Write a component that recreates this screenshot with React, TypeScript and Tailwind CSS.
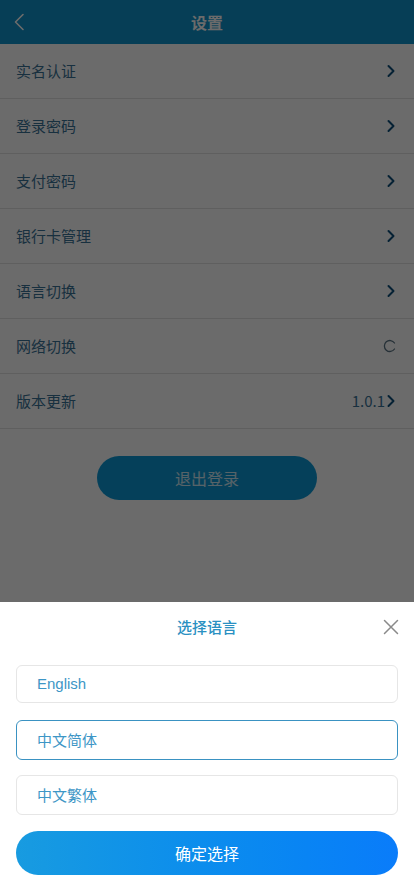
import React from "react";

const rows: { label: string; right?: "chevron" | "spinner" | "version" }[] = [
  { label: "实名认证", right: "chevron" },
  { label: "登录密码", right: "chevron" },
  { label: "支付密码", right: "chevron" },
  { label: "银行卡管理", right: "chevron" },
  { label: "语言切换", right: "chevron" },
  { label: "网络切换", right: "spinner" },
  { label: "版本更新", right: "version" },
];

const font = { fontFamily: '"Noto Sans CJK SC", "Noto Sans", sans-serif' };

function Chevron() {
  return (
    <svg width="10" height="14" viewBox="0 0 10 14" fill="none">
      <path d="M2.5 2 L7.5 7 L2.5 12" stroke="#0d4f7c" strokeWidth="2" strokeLinecap="round" strokeLinejoin="round" />
    </svg>
  );
}

export default function App() {
  return (
    <div className="relative w-[414px] h-[896px] overflow-hidden bg-white" style={font}>
      {/* header */}
      <div className="relative h-[44px] bg-[#0f93cc] flex items-center justify-center">
        <svg className="absolute left-[12px] top-[13px]" width="14" height="18" viewBox="0 0 14 18" fill="none">
          <path d="M11 1.5 L3.5 9 L11 16.5" stroke="#ffffff" strokeWidth="1.6" strokeLinecap="round" strokeLinejoin="round" />
        </svg>
        <span className="text-white text-[16px] font-bold">设置</span>
      </div>

      {/* rows */}
      <div className="flex flex-col">
        {rows.map((r) => (
          <div key={r.label} className="h-[55px] flex items-center justify-between pl-[16px] pr-[18px] border-b border-[#e2e2e2]">
            <span className="text-[15px] text-[#3a7397]">{r.label}</span>
            {r.right === "chevron" && <Chevron />}
            {r.right === "spinner" && (
              <svg width="14" height="14" viewBox="0 0 14 14" fill="none" className="mr-[-1px]">
                <path d="M11.5 4 A5.5 5.5 0 1 0 11.5 10" stroke="#5b7484" strokeWidth="1.3" strokeLinecap="round" />
              </svg>
            )}
            {r.right === "version" && (
              <div className="flex items-center gap-[1px]">
                <span className="text-[15px] text-[#3a7397]">1.0.1</span>
                <Chevron />
              </div>
            )}
          </div>
        ))}
      </div>

      <div className="flex justify-center mt-[27px]">
        <div className="w-[220px] h-[44px] rounded-full bg-[#0e9ad6] flex items-center justify-center">
          <span className="text-[16px] text-white/80">退出登录</span>
        </div>
      </div>

      {/* overlay */}
      <div className="absolute inset-0 bg-[rgba(0,0,0,0.58)]" />

      {/* bottom sheet */}
      <div className="absolute left-0 right-0 bottom-0 h-[294px] bg-white px-[16px]">
        <div className="relative h-[50px] flex items-center justify-center">
          <span className="text-[15px] font-medium text-[#2a90c2]">选择语言</span>
          <svg className="absolute right-[-1px] top-[17px]" width="16" height="16" viewBox="0 0 16 16" fill="none">
            <path d="M1.5 1.5 L14.5 14.5 M14.5 1.5 L1.5 14.5" stroke="#8a8a8a" strokeWidth="1.5" strokeLinecap="round" />
          </svg>
        </div>
        <div className="mt-[13px] flex flex-col gap-[15px]">
          <div className="h-[38px] mb-[2px] rounded-[6px] border border-[#e6e6e6] flex items-center pl-[20px]">
            <span className="text-[15px] text-[#3d96c6]" style={{ fontFamily: '"Liberation Sans", "Noto Sans CJK SC", sans-serif' }}>English</span>
          </div>
          <div className="h-[40px] rounded-[6px] border border-[#3a92c2] flex items-center pl-[20px]">
            <span className="text-[15px] text-[#3d96c6]">中文简体</span>
          </div>
          <div className="h-[40px] rounded-[6px] border border-[#e6e6e6] flex items-center pl-[20px]">
            <span className="text-[15px] text-[#3d96c6]">中文繁体</span>
          </div>
        </div>
        <div className="mt-[16px] h-[44px] rounded-full bg-gradient-to-r from-[#189be0] to-[#0a7cfa] flex items-center justify-center">
          <span className="text-[16px] text-white">确定选择</span>
        </div>
      </div>
    </div>
  );
}
